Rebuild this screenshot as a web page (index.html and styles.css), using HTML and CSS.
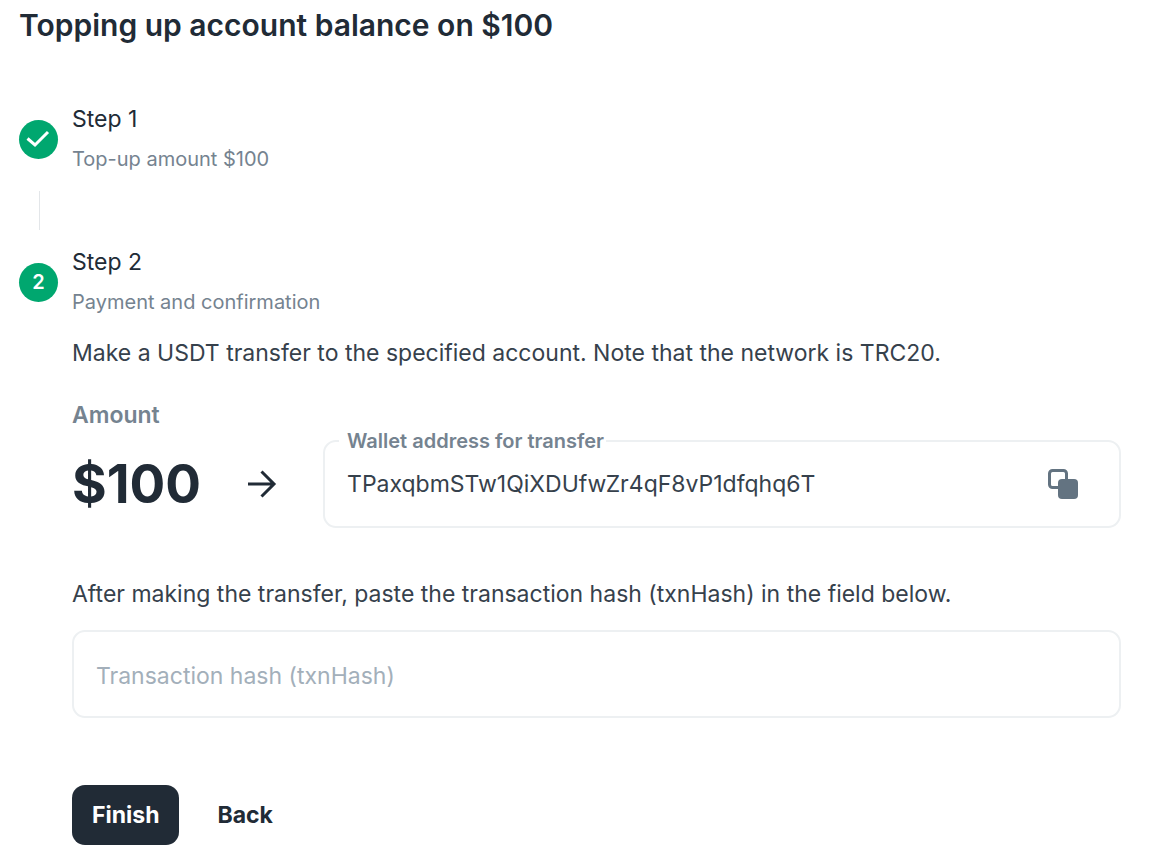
FILE: index.html
```html
<!DOCTYPE html>
<html lang="en">

<head>
    <meta charset="UTF-8">
    <meta name="viewport" content="width=device-width, initial-scale=1.0">
    <link rel="stylesheet" href="styles.css">
    <title>Topping up account balance</title>
</head>

<body>

    <main class="topup">
        <h1 class="topup-title">Topping up account balance on $100</h1>

        <div class="step">
            <span class="step-icon">
                <svg width="39" height="39" viewBox="0 0 39 39">
                    <path d="M8.500 18.500 L16 25 L29 12" fill="none" stroke="#fff" stroke-width="3"/>
                </svg>
            </span>
            <div class="step-text">
                <div class="step-label">Step 1</div>
                <div class="step-caption">Top-up amount $100</div>
            </div>
        </div>

        <div class="connector"></div>

        <div class="step">
            <span class="step-icon">2</span>
            <div class="step-text">
                <div class="step-label">Step 2</div>
                <div class="step-caption">Payment and confirmation</div>
            </div>
        </div>

        <form class="step-content">
            <p>Make a USDT transfer to the specified account. Note that the network is TRC20.</p>

            <div class="amount-label">Amount</div>
            <div class="transfer">
                <div class="amount">$100</div>
                <svg class="arrow" width="30" height="30" viewBox="0 0 30 30">
                    <path d="M1 15 H27 M14.500 2.500 L27 15 L14.500 27.500" fill="none" stroke="#212b36" stroke-width="3"/>
                </svg>
                <div class="field wallet">
                    <label for="wallet">Wallet address for transfer</label>
                    <input type="text" id="wallet" value="TPaxqbmSTw1QiXDUfwZr4qF8vP1dfqhq6T" readonly>
                    <button type="button" class="copy" aria-label="Copy">
                        <svg width="32" height="32" viewBox="0 0 32 32">
                            <rect x="2.500" y="2.500" width="17" height="17" rx="3" fill="none" stroke="#637381" stroke-width="3"/>
                            <rect x="11" y="11" width="20" height="20" rx="4" fill="#637381"/>
                        </svg>
                    </button>
                </div>
            </div>

            <p><label for="hash">After making the transfer, paste the transaction hash (txnHash) in the field below.</label></p>
            <div class="field hash">
                <input type="text" id="hash" placeholder="Transaction hash (txnHash)">
            </div>

            <div class="actions">
                <button type="button" class="btn finish">Finish</button>
                <button type="button" class="btn">Back</button>
            </div>
        </form>
    </main>

</body>

</html>
```
FILE: styles.css
```css
body {
    font-family: Inter, sans-serif;
    font-size: 23px;
    line-height: 36px;
    color: #36414c;
    background-color: #fff;
    margin: 0;
}

.topup {
    padding: 7px 37px 15px 19px;
}

.topup-title {
    margin: 0 0 56px;
    font-size: 30px;
    font-weight: 600;
    line-height: 36px;
    color: #212b36;
}

.step {
    display: flex;
    align-items: center;
    gap: 14px;
}

.step-icon {
    display: flex;
    justify-content: center;
    align-items: center;
    width: 39px;
    height: 39px;
    border-radius: 50%;
    background-color: #00a76f;
    color: #fff;
    font-size: 20px;
    font-weight: 600;
}

.step-label {
    line-height: 40px;
    color: #212b36;
}

.step-caption {
    font-size: 20px;
    line-height: 40px;
    color: #758390;
}

.connector {
    height: 39px;
    margin: 12px 0 12px 20px;
    border-left: 1px solid #e3e6e9;
}

.step-content {
    margin-left: 53px;
    padding-top: 13px;
}

.step-content p {
    margin: 0;
}

.amount-label {
    margin-top: 26px;
    font-weight: 600;
    color: #758390;
}

.transfer {
    display: flex;
    align-items: center;
    margin: 7px 0 48px;
}

.amount {
    font-size: 53px;
    font-weight: 700;
    line-height: 60px;
    color: #212b36;
}

.arrow {
    flex: none;
    margin: 0 46px;
}

.field {
    box-sizing: border-box;
    position: relative;
    display: flex;
    align-items: center;
    height: 88px;
    padding: 0 22px;
    border: 2px solid #edf0f2;
    border-radius: 13px;
}

.field input {
    flex: 1;
    min-width: 0;
    padding: 0;
    border: none;
    outline: none;
    background: none;
    font: inherit;
    color: #36414c;
}

.field input::placeholder {
    color: #a3afba;
    opacity: 1;
}

.wallet {
    flex: 1;
}

/* the label sits on the top border */
.wallet label {
    position: absolute;
    top: -14px;
    left: 14px;
    padding: 0 2px 0 8px;
    background-color: #fff;
    font-size: 20px;
    font-weight: 600;
    line-height: 26px;
    color: #758390;
}

.copy {
    padding: 0;
    margin-right: 18px;
    border: none;
    background: none;
    cursor: pointer;
}

.copy svg {
    display: block;
}

.hash {
    margin-top: 18px;
    padding-top: 4px;
}

.actions {
    display: flex;
    gap: 18px;
    margin-top: 67px;
}

.btn {
    height: 60px;
    padding: 0 20px;
    border: none;
    border-radius: 13px;
    background: none;
    font: inherit;
    font-weight: 700;
    color: #212b36;
    cursor: pointer;
}

.finish {
    background-color: #212b36;
    color: #fff;
}
```
